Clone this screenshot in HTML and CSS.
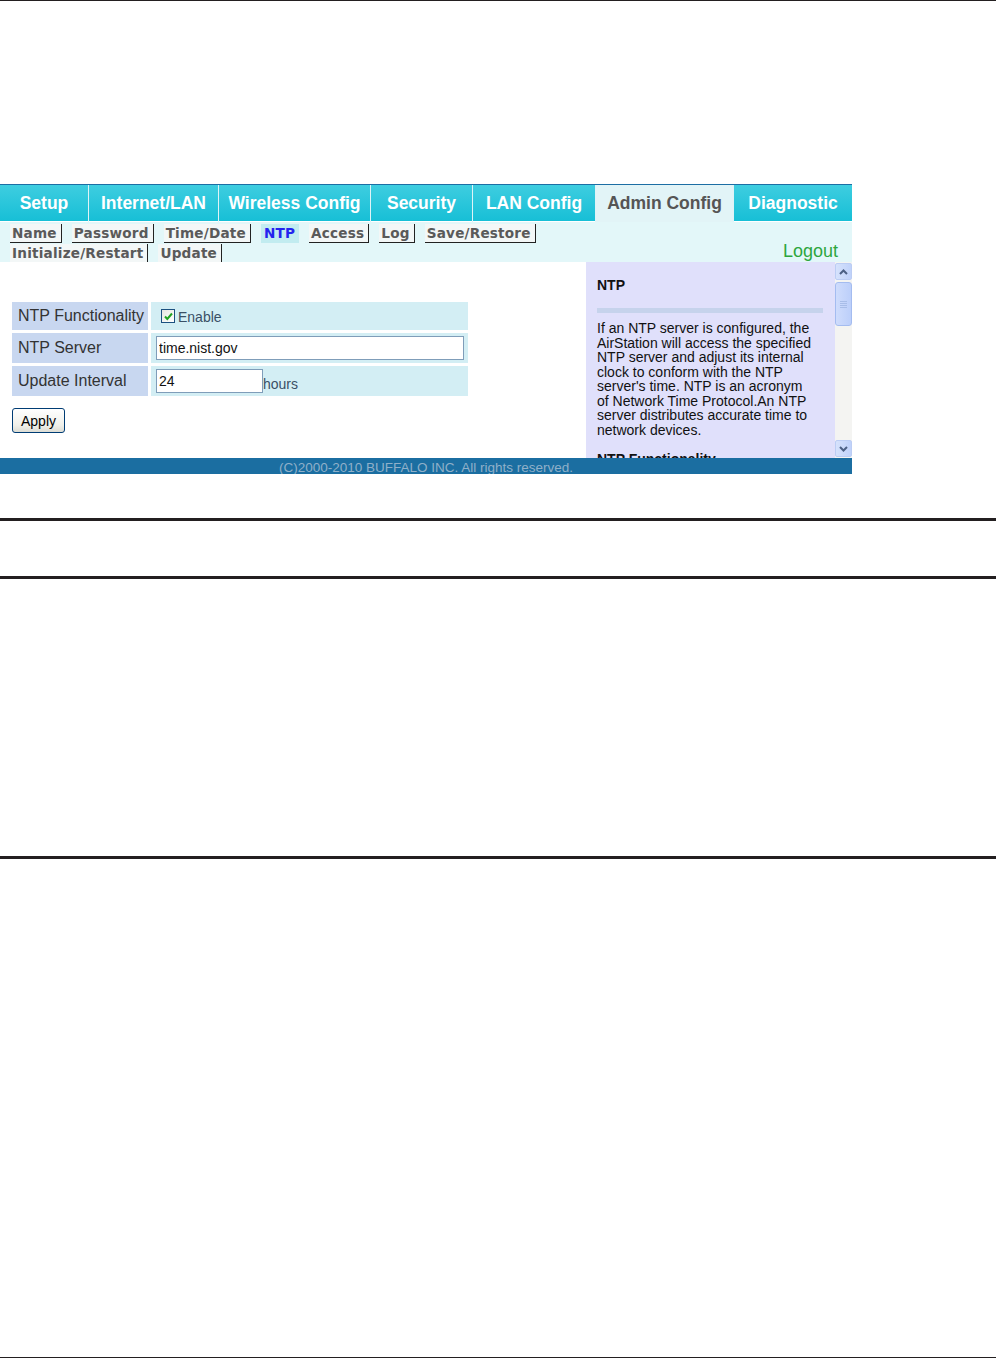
FILE: index.html
```html
<!DOCTYPE html>
<html>
<head>
<meta charset="utf-8">
<link rel="stylesheet" href="styles.css">
</head>
<body>
<div class="page">
  <div class="rule rule-top"></div>
  <div class="shot">
    <div class="tabs">
      <div class="tab">Setup</div>
      <div class="tab">Internet/LAN</div>
      <div class="tab">Wireless Config</div>
      <div class="tab">Security</div>
      <div class="tab">LAN Config</div>
      <div class="tab tab-active">Admin Config</div>
      <div class="tab">Diagnostic</div>
    </div>
    <div class="subnav">
      <div class="sublinks">
        <div class="subrow">
          <span class="sublink">Name</span>
          <span class="sublink">Password</span>
          <span class="sublink">Time/Date</span>
          <span class="sublink sublink-active">NTP</span>
          <span class="sublink">Access</span>
          <span class="sublink">Log</span>
          <span class="sublink">Save/Restore</span>
        </div>
        <div class="subrow">
          <span class="sublink">Initialize/Restart</span>
          <span class="sublink">Update</span>
        </div>
      </div>
      <div class="logout">Logout</div>
    </div>
    <div class="main">
      <div class="content">
        <div class="form">
          <div class="label">NTP Functionality</div>
          <div class="value value-check">
            <span class="checkbox"><svg width="11" height="11" viewBox="0 0 11 11"><path d="M2 5.5 L4.3 8 L9 2.5" fill="none" stroke="#21a321" stroke-width="2"/></svg></span>
            <span class="enable">Enable</span>
          </div>
          <div class="label">NTP Server</div>
          <div class="value">
            <input class="field field-wide" type="text" value="time.nist.gov">
          </div>
          <div class="label">Update Interval</div>
          <div class="value">
            <input class="field field-short" type="text" value="24">
            <span class="unit">hours</span>
          </div>
        </div>
        <button class="apply">Apply</button>
      </div>
      <div class="help">
        <div class="help-title">NTP</div>
        <div class="help-bar"></div>
        <p class="help-text">If an NTP server is configured, the AirStation will access the specified NTP server and adjust its internal clock to conform with the NTP server's time. NTP is an acronym of Network Time Protocol.An NTP server distributes accurate time to network devices.</p>
        <div class="help-title help-next">NTP Functionality</div>
      </div>
      <div class="scrollbar">
        <div class="sb-btn"><svg width="9" height="6" viewBox="0 0 9 6"><path d="M1 5 L4.5 1.5 L8 5" fill="none" stroke="#4d6185" stroke-width="2"/></svg></div>
        <div class="sb-thumb"><svg width="7" height="8" viewBox="0 0 7 8"><path d="M0 1.5 H7 M0 3.5 H7 M0 5.5 H7 M0 7.5 H7" stroke="#a8bde8" stroke-width="1"/></svg></div>
        <div class="sb-track"></div>
        <div class="sb-btn"><svg width="9" height="6" viewBox="0 0 9 6"><path d="M1 1 L4.5 4.5 L8 1" fill="none" stroke="#4d6185" stroke-width="2"/></svg></div>
      </div>
    </div>
    <div class="footer">(C)2000-2010 BUFFALO INC. All rights reserved.</div>
  </div>
  <div class="rule rule-thick r1"></div>
  <div class="rule rule-thick r2"></div>
  <div class="rule rule-thick r3"></div>
  <div class="rule rule-thin r4"></div>
</div>
</body>
</html>
```

FILE: styles.css
```css
html, body {
  margin: 0;
  padding: 0;
  background: #ffffff;
}

.page {
  width: 998px;
  font-family: "Liberation Sans", Arial, sans-serif;
}

.rule {
  width: 996px;
  background: #231f20;
}

.rule-top {
  height: 1px;
}

.rule-thick {
  height: 3px;
}

.rule-thin {
  height: 1px;
}

.r1 { margin-top: 44px; }
.r2 { margin-top: 55px; }
.r3 { margin-top: 277px; }
.r4 { margin-top: 498px; }

.shot {
  width: 852px;
  margin-top: 183px;
}

/* top tabs */
.tabs {
  display: grid;
  grid-template-columns: 88px 129px 151px 101px 122px 137px 118px;
  column-gap: 1px;
  border-top: 1px solid #1c6ea4;
  background: #dff3f7;
}

.tab {
  height: 36px;
  border-bottom: 1px solid #ffffff;
  background: linear-gradient(#3ecde0, #17bfd6);
  color: #ffffff;
  font: bold 17.5px/36px "Liberation Sans", Arial, sans-serif;
  text-align: center;
  white-space: nowrap;
}

.tab-active {
  background: #e2f4f7;
  border-bottom-color: #e2f4f7;
  color: #555555;
}

/* sub navigation */
.subnav {
  height: 40px;
  background: #e3f7f9;
  display: flex;
  justify-content: space-between;
  align-items: flex-end;
  box-sizing: border-box;
  padding: 2px 14px 0 10px;
}

.sublinks {
  align-self: flex-start;
  display: flex;
  flex-direction: column;
  gap: 1px;
}

.subrow {
  display: flex;
  gap: 10px;
}

.sublink {
  font: bold 13.6px/17px "DejaVu Sans", Verdana, sans-serif;
  letter-spacing: 0.2px;
  color: #5a5a5a;
  background: #f3f7f7;
  padding: 1px 4px 0 2px;
  border-right: 1px solid #222222;
  border-bottom: 1px solid #222222;
  white-space: nowrap;
}

.sublink-active {
  color: #2424ee;
  background: #c2ecf0;
  border-color: transparent;
  padding: 1px 3px 0 3px;
}

.logout {
  font: 18px/20px "Liberation Sans", Arial, sans-serif;
  color: #2ea63e;
  padding-bottom: 1px;
}

/* main */
.main {
  display: flex;
  height: 196px;
}

.content {
  width: 586px;
  box-sizing: border-box;
  padding: 40px 0 0 12px;
  background: #ffffff;
}

.form {
  display: grid;
  grid-template-columns: 136px 317px;
  grid-template-rows: 28px 30px 30px;
  gap: 3px;
}

.label {
  background: #c8d7f0;
  color: #333333;
  font-size: 16px;
  padding-left: 6px;
  display: flex;
  align-items: center;
}

.value {
  background: #d3eef4;
  display: flex;
  align-items: center;
  padding-left: 5px;
}

.value-check {
  padding-left: 10px;
}

.checkbox {
  width: 14px;
  height: 14px;
  border: 1px solid #1c5180;
  background: linear-gradient(135deg, #e6e6e0, #ffffff);
  display: flex;
  align-items: center;
  justify-content: center;
  box-sizing: border-box;
}

.enable {
  margin-left: 3px;
  margin-top: 2px;
  font-size: 14px;
  color: #3a5066;
}

.field {
  height: 24px;
  box-sizing: border-box;
  border: 1px solid #7f9db9;
  background: #ffffff;
  font: 14px "Liberation Sans", Arial, sans-serif;
  color: #111111;
  padding: 0 2px;
  margin: 0;
  outline: none;
}

.field-wide {
  width: 308px;
}

.field-short {
  width: 107px;
}

.unit {
  font-size: 14px;
  color: #3a5066;
  margin-top: 6px;
}

.apply {
  margin-top: 12px;
  width: 53px;
  height: 25px;
  border: 1px solid #003c74;
  border-radius: 3px;
  background: linear-gradient(#ffffff, #f0f0ea 70%, #dcdcd4);
  font: 14px "Liberation Sans", Arial, sans-serif;
  color: #000000;
  padding: 0;
}

/* help */
.help {
  width: 249px;
  box-sizing: border-box;
  padding: 15px 0 0 11px;
  background: #e0e0fb;
  overflow: hidden;
}

.help-title {
  font: bold 14px/16px "Liberation Sans", Arial, sans-serif;
  color: #111111;
}

.help-bar {
  width: 226px;
  height: 5px;
  margin-top: 15px;
  background: #c6d3ec;
}

.help-text {
  width: 219px;
  margin: 8px 0 0 0;
  font: 14px/14.5px "Liberation Sans", Arial, sans-serif;
  color: #111111;
}

.help-next {
  margin-top: 14px;
}

.scrollbar {
  width: 17px;
  display: flex;
  flex-direction: column;
  background: #f4f4f2;
}

.sb-btn {
  height: 17px;
  margin: 1px 0;
  box-sizing: border-box;
  border: 1px solid #bccdf4;
  border-radius: 2px;
  background: linear-gradient(90deg, #d6e2fc, #c0d2fa);
  display: flex;
  align-items: center;
  justify-content: center;
}

.sb-thumb {
  height: 44px;
  margin-top: 1px;
  box-sizing: border-box;
  border: 1px solid #a4bcf0;
  border-radius: 3px;
  background: linear-gradient(90deg, #cfdcfc, #bccffa);
  display: flex;
  align-items: center;
  justify-content: center;
}

.sb-track {
  flex: 1;
}

.footer {
  height: 16px;
  background: #1b6ea1;
  color: #8fb0c9;
  font: 13.5px/19px "Liberation Sans", Arial, sans-serif;
  text-align: center;
  overflow: hidden;
}
```
